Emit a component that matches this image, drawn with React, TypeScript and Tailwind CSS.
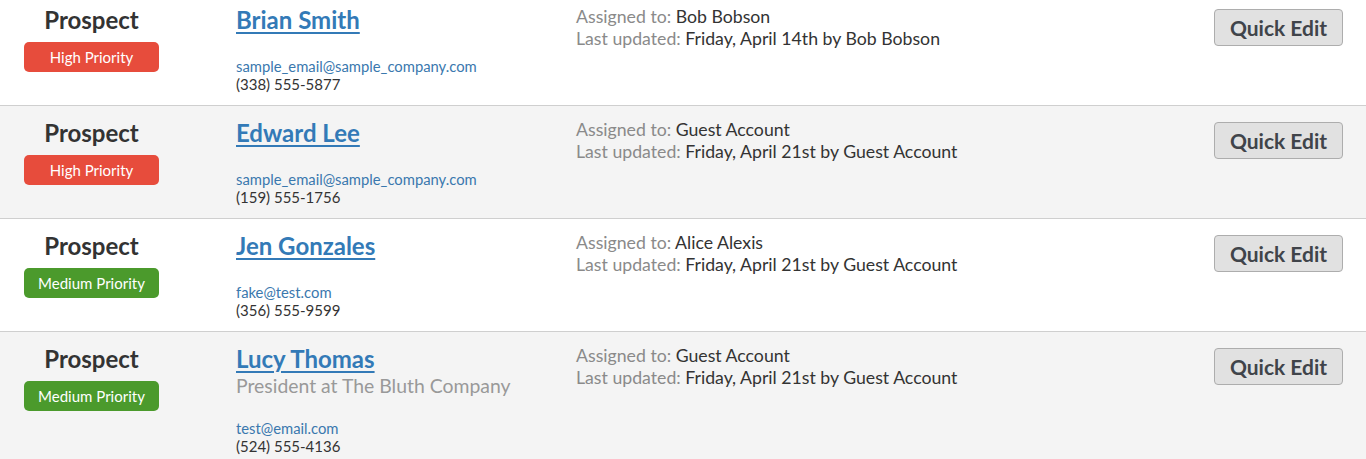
import React from "react";

type Row = {
  priority: "High" | "Medium";
  name: string;
  subtitle?: string;
  email: string;
  phone: string;
  assigned: string;
  updated: string;
};

const rows: Row[] = [
  {
    priority: "High",
    name: "Brian Smith",
    email: "sample_email@sample_company.com",
    phone: "(338) 555-5877",
    assigned: "Bob Bobson",
    updated: "Friday, April 14th by Bob Bobson",
  },
  {
    priority: "High",
    name: "Edward Lee",
    email: "sample_email@sample_company.com",
    phone: "(159) 555-1756",
    assigned: "Guest Account",
    updated: "Friday, April 21st by Guest Account",
  },
  {
    priority: "Medium",
    name: "Jen Gonzales",
    email: "fake@test.com",
    phone: "(356) 555-9599",
    assigned: "Alice Alexis",
    updated: "Friday, April 21st by Guest Account",
  },
  {
    priority: "Medium",
    name: "Lucy Thomas",
    subtitle: "President at The Bluth Company",
    email: "test@email.com",
    phone: "(524) 555-4136",
    assigned: "Guest Account",
    updated: "Friday, April 21st by Guest Account",
  },
];

export default function App() {
  return (
    <div
      className="w-[1366px] h-[459px] overflow-hidden bg-white"
      style={{ fontFamily: "Lato, 'Open Sans', sans-serif" }}
    >
      <div className="-mt-[7px]">
        {rows.map((r, i) => (
          <div
            key={i}
            className={`flex min-h-[113px] pt-[12px] pb-[10px] border-b border-[#cfcfcf] ${
              i % 2 === 1 ? "bg-[#f4f4f4]" : "bg-white"
            }`}
          >
            <div className="w-[183px] flex flex-col items-center">
              <div className="text-[24px] leading-[30px] font-bold text-[#333]">
                Prospect
              </div>
              <div
                className={`mt-[7px] w-[135px] h-[30px] rounded-[5px] flex items-center justify-center text-white text-[15px] ${
                  r.priority === "High" ? "bg-[#e74c3c]" : "bg-[#4b9a2c]"
                }`}
              >
                {r.priority} Priority
              </div>
            </div>
            <div className="ml-[53px] w-[340px] flex flex-col">
              <a
                href="#"
                className="text-[24px] leading-[30px] font-bold text-[#337ab7] underline decoration-[2px] underline-offset-[3px] self-start"
              >
                {r.name}
              </a>
              {r.subtitle && (
                <div className="text-[19.4px] leading-[23px] text-[#999]">
                  {r.subtitle}
                </div>
              )}
              <a
                href="#"
                className="mt-[22px] text-[14.8px] leading-[18px] text-[#3a78ae] self-start"
              >
                {r.email}
              </a>
              <div className="text-[15px] leading-[18px] text-[#333]">
                {r.phone}
              </div>
            </div>
            <div className="flex-1 mt-[1px] text-[17.7px] leading-[22px]">
              <div>
                <span className="text-[#8a8a8a]">Assigned to: </span>
                <span className="text-[#333]">{r.assigned}</span>
              </div>
              <div>
                <span className="text-[#8a8a8a]">Last updated: </span>
                <span className="text-[#333]">{r.updated}</span>
              </div>
            </div>
            <div className="mr-[23px] mt-[4px]">
              <button className="w-[129px] h-[37px] rounded-[4px] border border-[#adadad] bg-[#e1e1e1] text-[21px] font-bold text-[#40444a] flex items-center justify-center">
                Quick Edit
              </button>
            </div>
          </div>
        ))}
      </div>
    </div>
  );
}
